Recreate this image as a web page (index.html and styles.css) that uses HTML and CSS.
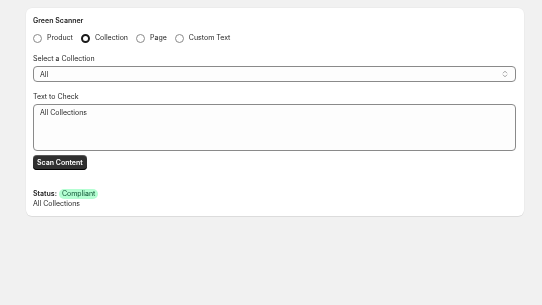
FILE: index.html
```html
<!DOCTYPE html>
<html>
<head>
<meta charset="utf-8">
<link rel="stylesheet" href="styles.css">
</head>
<body>
<div class="page">
  <div class="card">
    <div class="title">Green Scanner</div>
    <div class="radios">
      <div class="radio"><span class="dot"></span>Product</div>
      <div class="radio"><span class="dot on"></span>Collection</div>
      <div class="radio"><span class="dot"></span>Page</div>
      <div class="radio"><span class="dot"></span>Custom Text</div>
    </div>
    <div class="field">
      <div class="label">Select a Collection</div>
      <div class="select">
        <span>All</span>
        <svg class="chev" width="6" height="8" viewBox="0 0 6 8"><path d="M1.2 3 L3 1.2 L4.8 3 M1.2 5 L3 6.8 L4.8 5" fill="none" stroke="#8a8a8a" stroke-width="0.8" stroke-linecap="round" stroke-linejoin="round"/></svg>
      </div>
    </div>
    <div class="field field-text">
      <div class="label">Text to Check</div>
      <div class="textarea">All Collections</div>
    </div>
    <div><button class="btn">Scan Content</button></div>
    <div class="status">
      <div class="status-row"><span class="strong">Status:</span><span class="badge">Compliant</span></div>
      <div class="value">All Collections</div>
    </div>
  </div>
</div>
</body>
</html>
```
FILE: styles.css
```css
* { box-sizing: border-box; }
html, body { margin: 0; padding: 0; }
body {
  background: #f1f1f1;
  font-family: Inter, "Liberation Sans", sans-serif;
  font-size: 7px;
  color: #262626;
  width: 542px;
  height: 305px;
}
.page { padding: 8px 18px 0 26px; }
.card {
  background: #ffffff;
  border-radius: 6px;
  box-shadow: 0 1px 0 rgba(0,0,0,0.07), 0 0 0 0.5px rgba(0,0,0,0.04);
  padding: 8px 8px 8px 7px;
  height: 208px;
  display: flex;
  flex-direction: column;
  will-change: transform;
}
.title { font-weight: 600; line-height: 10px; }
.radios { display: flex; gap: 8px; margin-top: 7px; line-height: 10px; }
.radio { display: flex; align-items: center; gap: 5px; }
.dot {
  width: 9px; height: 9px; border-radius: 50%;
  border: 0.8px solid #8a8a8a; background: #fff; display: inline-block;
}
.dot.on { border: 2.6px solid #1a1a1a; }
.field { margin-top: 11px; }
.field-text { margin-top: 10px; }
.label { line-height: 10px; }
.select {
  margin-top: 2px;
  height: 16px;
  border: 0.8px solid #8a8a8a;
  border-radius: 4px;
  background: #fdfdfd;
  display: flex; align-items: center; justify-content: space-between;
  padding: 0 7px 0 6px;
}
.chev { display: block; }
.textarea {
  margin-top: 2px;
  height: 47px;
  border: 0.8px solid #8a8a8a;
  border-radius: 4px;
  background: #fdfdfd;
  padding: 3px 6px 2px;
  line-height: 10px;
}
.btn {
  margin-top: 4px;
  font-family: inherit; font-size: 7px; font-weight: 600;
  color: #fff;
  background: #303030;
  border: none;
  border-radius: 4px;
  height: 15px;
  padding: 0 4px;
  box-shadow: inset 0 -1px 0 #000, inset 0 1px 0 rgba(255,255,255,0.2);
}
.status { margin-top: 18px; }
.status-row { display: flex; align-items: center; gap: 2px; line-height: 10px; margin-top: 1px; }
.strong { font-weight: 600; }
.badge {
  background: #b4fed2; color: #0c5132;
  border-radius: 5px; padding: 0 3px; line-height: 10px;
}
.value { line-height: 11px; margin-top: -1px; }
```
